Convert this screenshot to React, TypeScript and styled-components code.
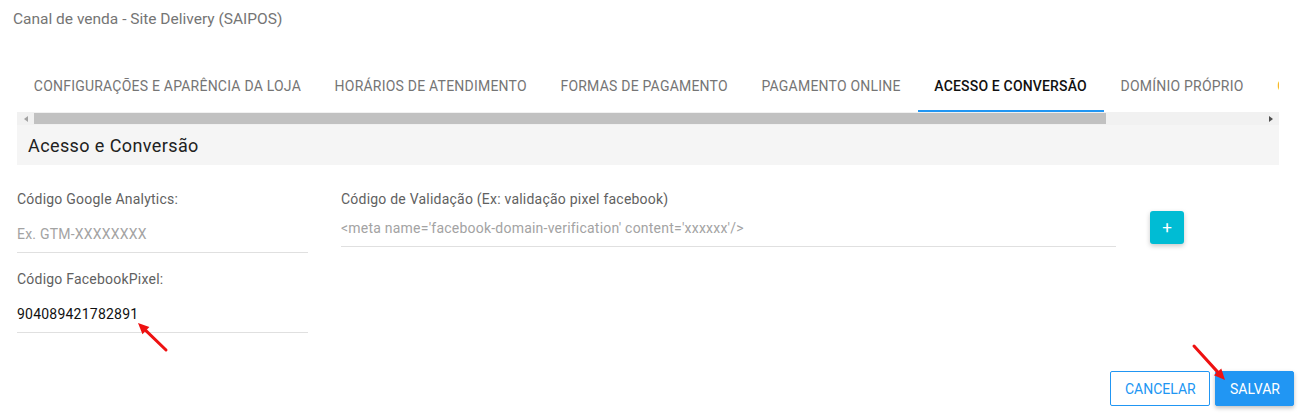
import styled, { createGlobalStyle } from 'styled-components'

const GlobalStyle = createGlobalStyle`
  body {
    margin: 0;
    background: #fff;
    font-family: Roboto, "Liberation Sans", sans-serif;
  }
`

const Page = styled.div`
  width: 1303px;
  height: 420px;
  position: relative;
  overflow: hidden;
`

const Title = styled.div`
  padding: 10px 0 0 13px;
  height: 40px;
  font-size: 15.5px;
  color: #757575;
  box-sizing: border-box;
`

const Content = styled.div`
  margin: 22px 24px 0 17px;
`

const TabStrip = styled.div`
  display: flex;
  height: 50px;
  overflow: hidden;
  white-space: nowrap;
`

const Tab = styled.div<{ active?: boolean }>`
  flex: none;
  padding: 0 16.8px;
  height: 48px;
  line-height: 48px;
  font-size: 14px;
  font-weight: ${p => (p.active ? 500 : 400)};
  letter-spacing: ${p => (p.active ? '0.17px' : '0.22px')};
  color: ${p => (p.active ? '#111' : '#757575')};
  border-bottom: 2px solid ${p => (p.active ? '#2196f3' : 'transparent')};
`

const PartialTab = styled(Tab)`
  color: #f5a623;
`

const ScrollBar = styled.div`
  display: flex;
  align-items: center;
  height: 13px;
  background: #f1f1f1;
`

const ScrollArrow = styled.div<{ dir: 'left' | 'right' }>`
  width: 17px;
  height: 13px;
  display: flex;
  align-items: center;
  justify-content: center;
  &::before {
    content: '';
    border-top: 3.5px solid transparent;
    border-bottom: 3.5px solid transparent;
    ${p =>
      p.dir === 'left'
        ? 'border-right: 4px solid #a3a3a3;'
        : 'border-left: 4px solid #505050;'}
  }
`

const Track = styled.div`
  flex: 1;
  height: 13px;
  display: flex;
  align-items: center;
`

const Thumb = styled.div`
  height: 11px;
  background: #c1c1c1;
`

const SectionHeader = styled.div`
  background: #f5f5f5;
  height: 40px;
  padding-left: 11px;
  display: flex;
  align-items: center;
  font-size: 18px;
  letter-spacing: 0.4px;
  color: #212121;
`

const Form = styled.div`
  display: flex;
  align-items: flex-start;
  margin-top: 22px;
  letter-spacing: 0.22px;
`

const LeftColumn = styled.div`
  width: 291px;
  display: flex;
  flex-direction: column;
`

const MiddleColumn = styled.div`
  width: 775px;
  margin-left: 33px;
`

const Field = styled.div<{ gap: number }>`
  display: flex;
  flex-direction: column;
  margin-bottom: 14px;
  & > input {
    margin-top: ${p => p.gap}px;
  }
`

const Label = styled.label`
  font-size: 14px;
  color: #616161;
  line-height: 24px;
`

const Input = styled.input`
  border: none;
  border-bottom: 1px solid #e0e0e0;
  padding: 0 0 9px 0;
  height: 29px;
  box-sizing: border-box;
  font-family: Roboto, "Liberation Sans", sans-serif;
  font-size: 14px;
  letter-spacing: 0.22px;
  color: #111;
  outline: none;
  background: transparent;
  &::placeholder {
    color: #a3a3a3;
  }
`

const AddButton = styled.button`
  margin: 24px 0 0 34px;
  width: 34px;
  height: 33px;
  border: none;
  border-radius: 3px;
  background: #00bcd4;
  color: #fff;
  font-size: 17px;
  font-family: Roboto, sans-serif;
  line-height: 1;
  padding: 0;
  box-shadow: 0 2px 5px rgba(0, 0, 0, 0.22);
`

const Actions = styled.div`
  position: absolute;
  right: 9px;
  top: 371px;
  display: flex;
  gap: 5px;
`

const Button = styled.button<{ primary?: boolean }>`
  height: 35px;
  padding: 0 14px;
  font-family: Roboto, sans-serif;
  font-size: 14px;
  border-radius: 2px;
  border: 1px solid #2196f3;
  background: ${p => (p.primary ? '#2196f3' : '#fff')};
  color: ${p => (p.primary ? '#fff' : '#2196f3')};
  box-shadow: ${p => (p.primary ? '0 2px 4px rgba(0,0,0,0.25)' : 'none')};
  width: ${p => (p.primary ? '79px' : '100px')};
`

const ArrowLayer = styled.svg`
  position: absolute;
  left: 0;
  top: 0;
  pointer-events: none;
`

const tabs = [
  'CONFIGURAÇÕES E APARÊNCIA DA LOJA',
  'HORÁRIOS DE ATENDIMENTO',
  'FORMAS DE PAGAMENTO',
  'PAGAMENTO ONLINE',
  'ACESSO E CONVERSÃO',
  'DOMÍNIO PRÓPRIO',
]

const RedArrow = ({ x1, y1, x2, y2 }: { x1: number; y1: number; x2: number; y2: number }) => {
  const ang = Math.atan2(y2 - y1, x2 - x1)
  const len = 11
  const w = 5
  const bx = x2 - len * Math.cos(ang)
  const by = y2 - len * Math.sin(ang)
  const px = -Math.sin(ang) * w
  const py = Math.cos(ang) * w
  return (
    <g>
      <line x1={x1} y1={y1} x2={bx} y2={by} stroke="#ee1111" strokeWidth="3" strokeLinecap="round" />
      <polygon points={`${x2},${y2} ${bx + px},${by + py} ${bx - px},${by - py}`} fill="#ee1111" />
    </g>
  )
}

export default function App() {
  return (
    <Page>
      <GlobalStyle />
      <Title>Canal de venda - Site Delivery (SAIPOS)</Title>
      <Content>
        <TabStrip>
          {tabs.map(t => (
            <Tab key={t} active={t === 'ACESSO E CONVERSÃO'}>
              {t}
            </Tab>
          ))}
          <PartialTab>CARDÁPIO</PartialTab>
        </TabStrip>
        <ScrollBar>
          <ScrollArrow dir="left" />
          <Track>
            <Thumb style={{ width: '87.3%' }} />
          </Track>
          <ScrollArrow dir="right" />
        </ScrollBar>
        <SectionHeader>Acesso e Conversão</SectionHeader>
        <Form>
          <LeftColumn>
            <Field gap={13}>
              <Label>Código Google Analytics:</Label>
              <Input placeholder="Ex. GTM-XXXXXXXX" />
            </Field>
            <Field gap={13}>
              <Label>Código FacebookPixel:</Label>
              <Input defaultValue="904089421782891" />
            </Field>
          </LeftColumn>
          <MiddleColumn>
            <Field gap={7}>
              <Label>Código de Validação (Ex: validação pixel facebook)</Label>
              <Input placeholder="<meta name='facebook-domain-verification' content='xxxxxx'/>" />
            </Field>
          </MiddleColumn>
          <AddButton>+</AddButton>
        </Form>
      </Content>
      <Actions>
        <Button>CANCELAR</Button>
        <Button primary>SALVAR</Button>
      </Actions>
      <ArrowLayer width="1303" height="420">
        <RedArrow x1={166} y1={350} x2={138} y2={323} />
        <RedArrow x1={1194} y1={346} x2={1225} y2={380} />
      </ArrowLayer>
    </Page>
  )
}
